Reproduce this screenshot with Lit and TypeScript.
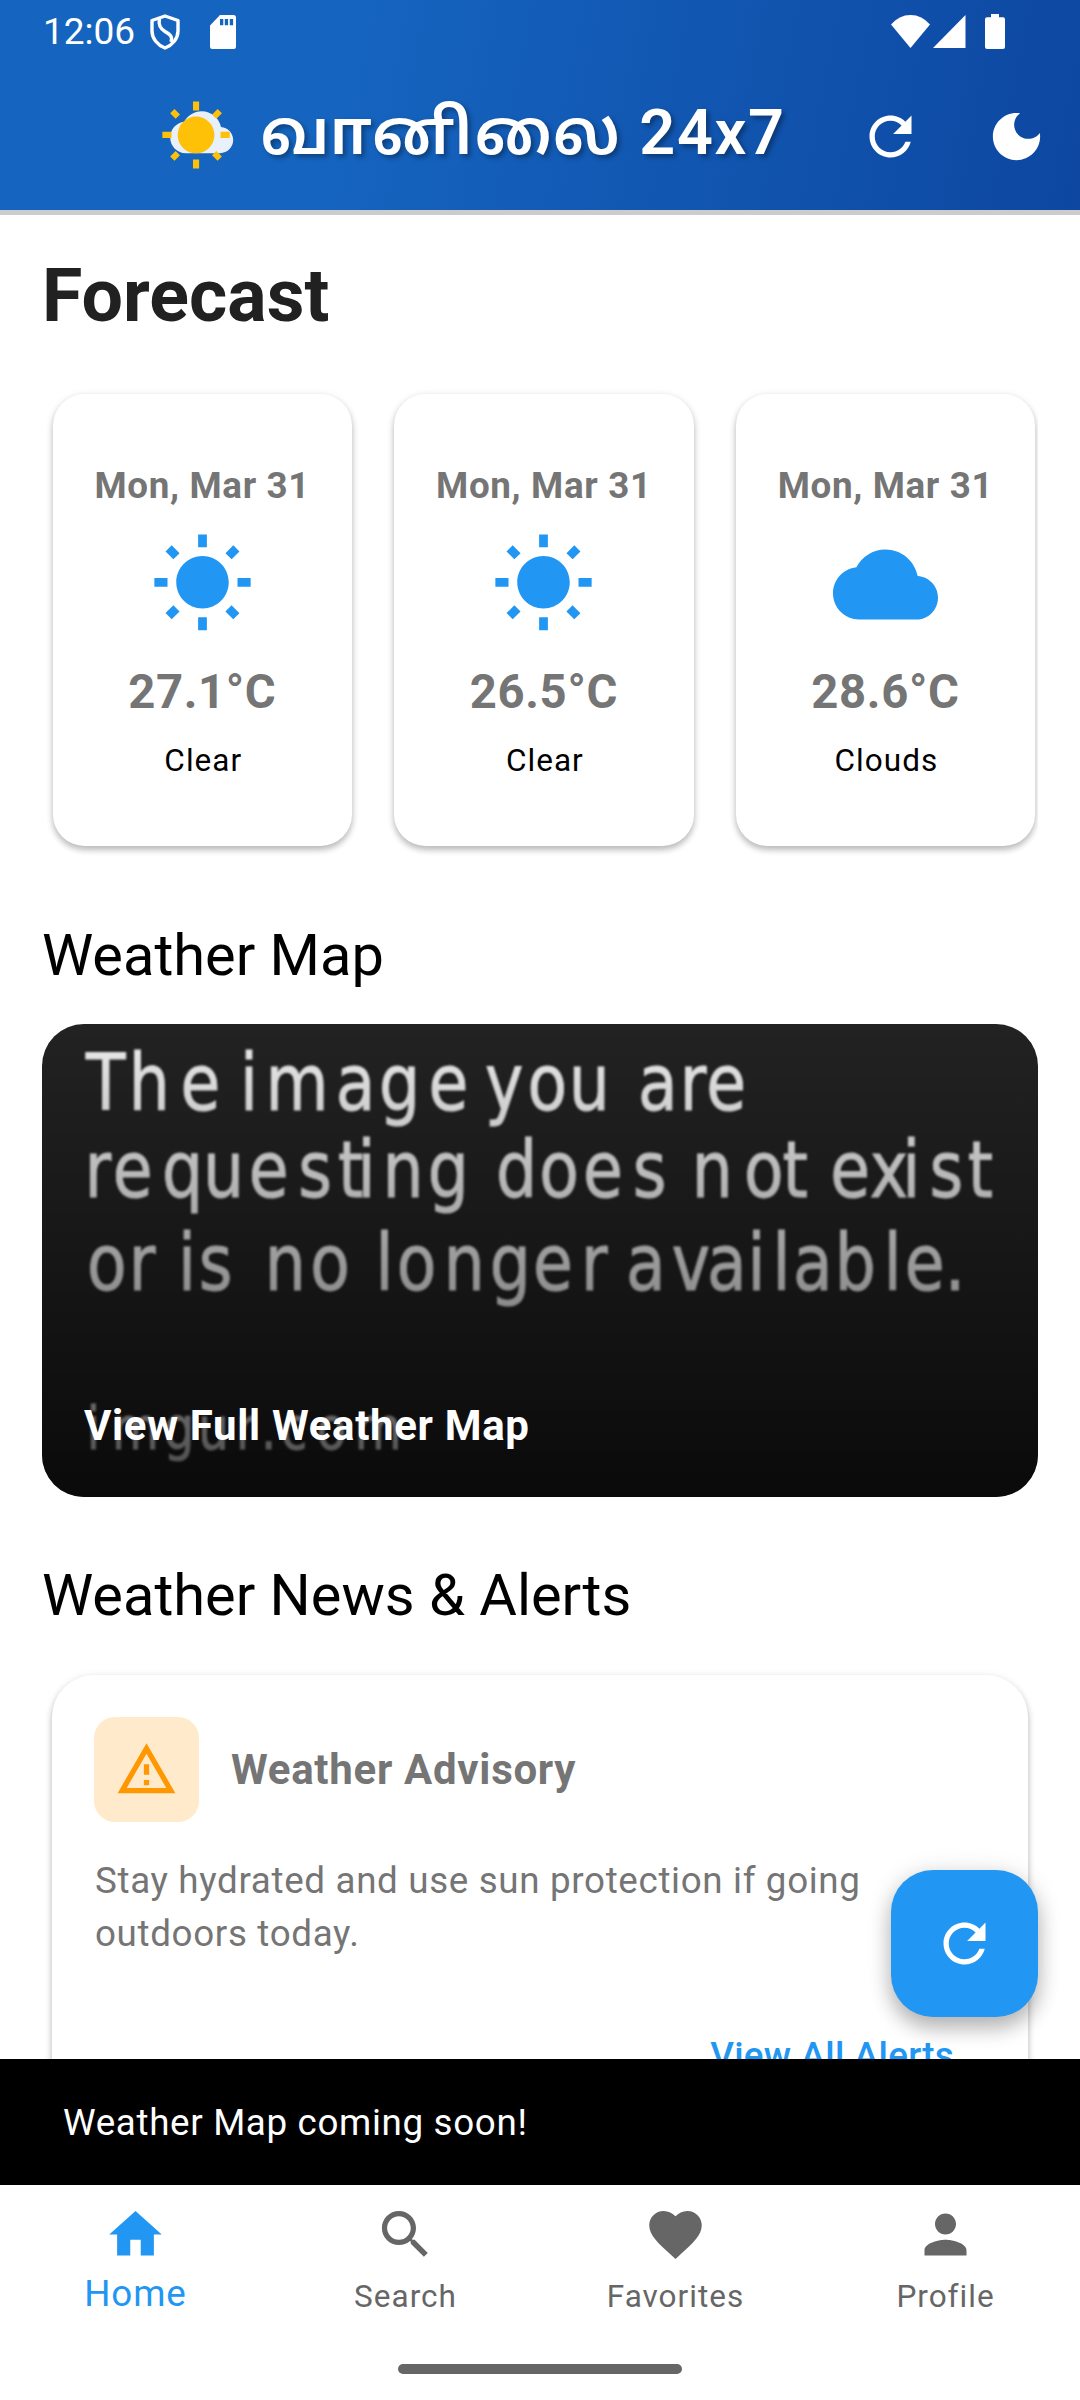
import { LitElement, html, svg, css } from "lit";
import { customElement } from "lit/decorators.js";

const ICONS: Record<string, string> = {
  sun: "M6.76 4.84l-1.8-1.79-1.41 1.41 1.79 1.79 1.42-1.41zM4 10.5H1v2h3v-2zm9-9.95h-2V3.5h2V.55zm7.45 3.91l-1.41-1.41-1.79 1.79 1.41 1.41 1.79-1.79zm-3.21 13.7l1.79 1.8 1.41-1.41-1.8-1.79-1.4 1.4zM20 10.5v2h3v-2h-3zm-8-5c-3.31 0-6 2.69-6 6s2.69 6 6 6 6-2.69 6-6-2.69-6-6-6zm-1 16.95h2V19.5h-2v2.95zm-7.45-3.91l1.41 1.41 1.79-1.8-1.41-1.41-1.79 1.8z",
  cloud: "M19.35 10.04C18.67 6.59 15.64 4 12 4 9.11 4 6.6 5.64 5.35 8.04 2.34 8.36 0 10.91 0 14c0 3.31 2.69 6 6 6h13c2.76 0 5-2.24 5-5 0-2.64-2.05-4.78-4.65-4.96z",
  warning: "M12 5.99L19.53 19H4.47L12 5.99M12 2L1 21h22L12 2zm1 14h-2v2h2v-2zm0-6h-2v4h2v-4z",
  refresh: "M17.65 6.35C16.2 4.9 14.21 4 12 4c-4.42 0-7.99 3.58-7.99 8s3.57 8 7.99 8c3.73 0 6.84-2.55 7.73-6h-2.08c-.82 2.33-3.04 4-5.65 4-3.31 0-6-2.69-6-6s2.69-6 6-6c1.66 0 3.14.69 4.22 1.78L13 11h7V4l-2.35 2.35z",
  moon: "M12 3c-4.97 0-9 4.03-9 9s4.03 9 9 9 9-4.03 9-9c0-.46-.04-.92-.1-1.36-.98 1.37-2.58 2.26-4.4 2.26-2.98 0-5.4-2.42-5.4-5.4 0-1.81.89-3.42 2.26-4.4-.44-.06-.9-.1-1.36-.1z",
  home: "M10 20v-6h4v6h5v-8h3L12 3 2 12h3v8z",
  search: "M15.5 14h-.79l-.28-.27C15.41 12.59 16 11.11 16 9.5 16 5.91 13.09 3 9.5 3S3 5.91 3 9.5 5.91 16 9.5 16c1.61 0 3.09-.59 4.23-1.57l.27.28v.79l5 4.99L20.49 19l-4.99-5zm-6 0C7.01 14 5 11.99 5 9.5S7.01 5 9.5 5 14 7.01 14 9.5 11.99 14 9.5 14z",
  heart: "M12 21.35l-1.45-1.32C5.4 15.36 2 12.28 2 8.5 2 5.42 4.42 3 7.5 3c1.74 0 3.41.81 4.5 2.09C13.09 3.81 14.76 3 16.5 3 19.58 3 22 5.42 22 8.5c0 3.78-3.4 6.86-8.55 11.54L12 21.35z",
  person: "M12 12c2.21 0 4-1.79 4-4s-1.79-4-4-4-4 1.79-4 4 1.79 4 4 4zm0 2c-2.67 0-8 1.34-8 4v2h16v-2c0-2.66-5.33-4-8-4z",
};

const icon = (name: string, cls = "ic") =>
  html`<svg class=${cls} viewBox="0 0 24 24"><path d=${ICONS[name]} /></svg>`;

const FORECAST = [
  { day: "Mon, Mar 31", icon: "sun", temp: "27.1°C", sky: "Clear" },
  { day: "Mon, Mar 31", icon: "sun", temp: "26.5°C", sky: "Clear" },
  { day: "Mon, Mar 31", icon: "cloud", temp: "28.6°C", sky: "Clouds" },
];

const TABS = [
  { icon: "home", label: "Home", on: true },
  { icon: "search", label: "Search", on: false },
  { icon: "heart", label: "Favorites", on: false },
  { icon: "person", label: "Profile", on: false },
];

/* Left side bearings in em, so that each letter can be placed by its ink edge. */
const BEARING: Record<string, number> = {
  T: 0, h: 0.091, e: 0.055, i: 0.094, m: 0.091, a: 0.06, g: 0.055, y: 0.03, o: 0.055,
  u: 0.085, r: 0.091, q: 0.055, s: 0.054, t: 0.018, n: 0.091, d: 0.055, x: 0.03,
  l: 0.094, v: 0.03, b: 0.091, ".": 0.107, c: 0.055,
};
const SQUEEZE = 0.83;

interface PlacedLine { text: string; size: number; y: number; xs: number[]; }

const NOTICE: PlacedLine[] = [
  { text: "The image you are", size: 78, y: 1110.5,
    xs: [86, 134.6, 184.2, 246, 271.3, 339.5, 382.5, 432, 487, 531, 574.4, 642, 685.6, 709.7] },
  { text: "requesting does not exist", size: 78, y: 1197,
    xs: [90.5, 116.4, 165.6, 208.6, 252.4, 301.6, 339.2, 363.6, 388.4, 431.4, 499.6, 542.7, 586.5, 636.4, 697.7, 747.6, 783.8, 833.7, 871.6, 908.4, 932.9, 969] },
  { text: "or is no longer available.", size: 78, y: 1290,
    xs: [90.5, 134.6, 184.2, 202.4, 270.6, 313.7, 381.5, 400.4, 449.7, 493.4, 536.5, 586.8, 629.8, 673.6, 710.8, 753.5, 778.6, 796.9, 840.6, 889.8, 908.4, 951.8] },
  { text: "imgur.com", size: 58, y: 1449,
    xs: [91.2, 116.4, 166.3, 202.4, 240.3, 266.2, 283.4, 319.5, 359.1] },
];

function placedLine(l: PlacedLine) {
  let k = 0;
  const xs: string[] = [];
  for (const ch of l.text) {
    if (ch === " ") {
      xs.push(xs[xs.length - 1]);
      continue;
    }
    xs.push(((l.xs[k++] - 42) / SQUEEZE - BEARING[ch] * l.size).toFixed(1));
  }
  return svg`<text transform="scale(${SQUEEZE} 1)" font-size=${l.size} x=${xs.join(" ")} y=${l.y - 1024}>${l.text}</text>`;
}

@customElement("app-root")
export class AppRoot extends LitElement {
  static styles = css`
    :host {
      display: block;
      width: 1080px;
      height: 2400px;
      background: #fff;
      font-family: Roboto, "Noto Sans Tamil", "Noto Sans", sans-serif;
      color: #000;
    }
    * { box-sizing: border-box; }
    svg { display: block; fill: currentColor; flex: none; }
    .ic { width: 63px; height: 63px; }
    .screen {
      position: relative;
      display: flex;
      flex-direction: column;
      height: 2400px;
      overflow: hidden;
    }
    .header {
      height: 210px;
      flex: none;
      color: #fff;
      background: linear-gradient(101deg, #1565c0 0%, #1565c0 30%, #0d47a1 100%);
      box-shadow: 0 5px 0 #ccc;
      display: flex;
      flex-direction: column;
    }
    .status {
      height: 63px;
      display: flex;
      align-items: center;
      padding: 0 75px 0 43px;
    }
    .clock { font-size: 37px; line-height: 63px; width: 107px; }
    .shield { width: 30px; height: 36px; }
    .sd { width: 26px; height: 34px; margin-left: 30px; }
    .push { flex: 1; }
    .wifi { width: 39px; height: 33px; }
    .signal { width: 33px; height: 33px; margin-left: 3px; }
    .battery { width: 20px; height: 35px; margin-left: 19px; }
    .bar { height: 147px; display: flex; align-items: center; padding: 0 32px 0 158px; }
    .logo { width: 78px; height: 74px; }
    .title {
      margin: 0 0 8px 24px;
      flex: 1;
      font-size: 63px;
      line-height: 74px;
      font-weight: 600;
      letter-spacing: 1.65px;
      white-space: nowrap;
      text-shadow: 3px 3px 5px rgba(0, 0, 0, 0.35);
    }
    .actions { display: flex; gap: 63px; }
    .body { flex: none; height: 1849px; overflow: hidden; padding: 0 42px; }
    h1, h2, p { margin: 0; font-weight: 400; }
    .h1 { padding-top: 42px; font-size: 73.5px; line-height: 88px; font-weight: 700; color: #212121; }
    .row {
      display: flex;
      gap: 42px;
      padding: 10.5px;
      margin-top: 43px;
      height: 473px;
      overflow: hidden;
    }
    .card {
      width: 299.6px;
      height: 452px;
      flex: none;
      background: #fff;
      border-radius: 31.5px;
      box-shadow: 0 4px 6px rgba(0, 0, 0, 0.24), 0 1px 8px rgba(0, 0, 0, 0.08);
      display: flex;
      flex-direction: column;
      align-items: center;
      padding-top: 67px;
    }
    .day { font-size: 36.75px; line-height: 50px; font-weight: 700; color: #757575; letter-spacing: 0.66px; }
    .big { width: 105px; height: 105px; margin-top: 21px; color: #2196f3; }
    .temp { font-size: 47.25px; line-height: 60px; font-weight: 700; color: #757575; letter-spacing: 0.66px; margin-top: 25px; }
    .sky { font-size: 31.5px; line-height: 42px; letter-spacing: 1.05px; margin-top: 18px; padding-left: 2px; }
    .h2 { font-size: 57.75px; line-height: 70px; }
    .gap-map { margin-top: 64px; }
    .map {
      position: relative;
      height: 472.5px;
      margin-top: 34px;
      border-radius: 42px;
      overflow: hidden;
      background: #222;
    }
    .notice {
      width: 996px;
      height: 472px;
      fill: #eee;
      stroke: #eee;
      stroke-width: 1px;
      font-family: "DejaVu Sans", sans-serif;
      filter: blur(1.2px);
    }
    .shade {
      position: absolute;
      inset: 0;
      display: flex;
      align-items: flex-end;
      padding: 40px 42px;
      color: #fff;
      font-size: 42px;
      line-height: 62px;
      font-weight: 700;
      letter-spacing: 0.66px;
      background: linear-gradient(rgba(0, 0, 0, 0), rgba(0, 0, 0, 0.7));
    }
    .gap-news { margin-top: 63.5px; }
    .alert {
      margin: 45px 10.5px 0 10px;
      height: 500px;
      border-radius: 42px;
      background: #fff;
      box-shadow: 0 4px 6px rgba(0, 0, 0, 0.24), 0 1px 8px rgba(0, 0, 0, 0.08);
      padding: 42px;
    }
    .alert-head { display: flex; align-items: center; gap: 32px; }
    .badge {
      width: 105px;
      height: 105px;
      border-radius: 21px;
      background: #ffeacc;
      color: #ff9800;
      display: grid;
      place-items: center;
    }
    .alert-title { font-size: 42px; font-weight: 700; color: #757575; letter-spacing: 0.7px; }
    .alert-text { margin-top: 33px; padding-left: 1px; font-size: 36.75px; line-height: 52.5px; color: #757575; letter-spacing: 0.66px; }
    .more { text-align: right; padding-right: 31.5px; margin-top: 74px; font-size: 36.75px; line-height: 44px; font-weight: 500; color: #2196f3; letter-spacing: 0.26px; }
    .fab {
      position: absolute;
      left: 891px;
      top: 1870px;
      width: 147px;
      height: 147px;
      border-radius: 42px;
      background: #2196f3;
      color: #fff;
      display: grid;
      place-items: center;
      box-shadow: 0 12px 20px rgba(0, 0, 0, 0.24), 0 2px 26px rgba(0, 0, 0, 0.12);
    }
    .snack {
      position: relative;
      height: 126px;
      flex: none;
      background: #000;
      color: #fff;
      padding-left: 63px;
      font-size: 36.75px;
      line-height: 128px;
      letter-spacing: 0.66px;
    }
    .tabs { position: relative; height: 215px; flex: none; background: #fff; display: flex; }
    .tab { flex: 1; display: flex; flex-direction: column; align-items: center; padding-top: 18px; color: #666; }
    .tab .label { font-size: 31.5px; line-height: 44px; margin-top: 9px; letter-spacing: 1px; padding-left: 1px; }
    .tab.on { color: #2196f3; }
    .tab.on .label { font-size: 36.75px; margin-top: 6px; letter-spacing: 0.9px; }
    .pill { position: absolute; left: 398px; top: 179px; width: 284px; height: 10px; border-radius: 5px; background: #666; }
  `;

  render() {
    return html`
      <div class="screen">
        <header class="header">
          <div class="status">
            <span class="clock">12:06</span>
            <svg class="shield" viewBox="0 0 30 36">
              <path d="M15 2L28 6.5V17C28 24.5 22.5 31 15 34C7.5 31 2 24.5 2 17V6.5Z" fill="none" stroke="#fff" stroke-width="3.4" stroke-linejoin="round" />
              <path d="M9.5 4.5C8 12 11 15 15 17.5C20 20.5 23 22.5 21 28" fill="none" stroke="#fff" stroke-width="3.4" />
            </svg>
            <svg class="sd" viewBox="0 0 26 34">
              <path fill-rule="evenodd" d="M10 0H23.5A2.5 2.5 0 0 1 26 2.5V31.5A2.5 2.5 0 0 1 23.5 34H2.5A2.5 2.5 0 0 1 0 31.5V10.5ZM10 4V10.3H13.3V4ZM14.8 4V10.3H18.1V4ZM19.8 4V10.3H23.1V4Z" />
            </svg>
            <span class="push"></span>
            <svg class="wifi" viewBox="0 0 39 33"><path d="M19.5 33L0 9.5Q8 0 19.5 0T39 9.5Z" /></svg>
            <svg class="signal" viewBox="0 0 33 33"><path d="M0 33H32.5V0Z" /></svg>
            <svg class="battery" viewBox="0 0 20 35">
              <path d="M6 0H14V3.3H18Q20 3.3 20 5.3V33Q20 35 18 35H2Q0 35 0 33V5.3Q0 3.3 2 3.3H6Z" />
            </svg>
          </div>
          <div class="bar">
            <svg class="logo" viewBox="0 0 78 74">
              <path transform="translate(12.2 0.7) scale(2.625)" fill="#e8f0f9" d=${ICONS.cloud} />
              <path transform="translate(1.3 -0.3) scale(3.0625)" fill="#ffc107" d=${ICONS.sun} />
            </svg>
            <h1 class="title">வானிலை 24x7</h1>
            <div class="actions">${icon("refresh")}${icon("moon")}</div>
          </div>
        </header>

        <main class="body">
          <h1 class="h1">Forecast</h1>
          <section class="row">
            ${FORECAST.map(
              (f) => html`<article class="card">
                <span class="day">${f.day}</span>
                ${icon(f.icon, "big")}
                <span class="temp">${f.temp}</span>
                <span class="sky">${f.sky}</span>
              </article>`
            )}
          </section>

          <h2 class="h2 gap-map">Weather Map</h2>
          <section class="map">
            <svg class="notice" viewBox="0 0 996 472">${NOTICE.map(placedLine)}</svg>
            <div class="shade">View Full Weather Map</div>
          </section>

          <h2 class="h2 gap-news">Weather News &amp; Alerts</h2>
          <section class="alert">
            <div class="alert-head">
              <span class="badge">${icon("warning")}</span>
              <span class="alert-title">Weather Advisory</span>
            </div>
            <p class="alert-text">Stay hydrated and use sun protection if going outdoors today.</p>
            <div class="more">View All Alerts</div>
          </section>
        </main>

        <div class="fab">${icon("refresh")}</div>
        <div class="snack">Weather Map coming soon!</div>
        <nav class="tabs">
          ${TABS.map(
            (t) => html`<div class=${t.on ? "tab on" : "tab"}>
              ${icon(t.icon)}<span class="label">${t.label}</span>
            </div>`
          )}
          <span class="pill"></span>
        </nav>
      </div>
    `;
  }
}
